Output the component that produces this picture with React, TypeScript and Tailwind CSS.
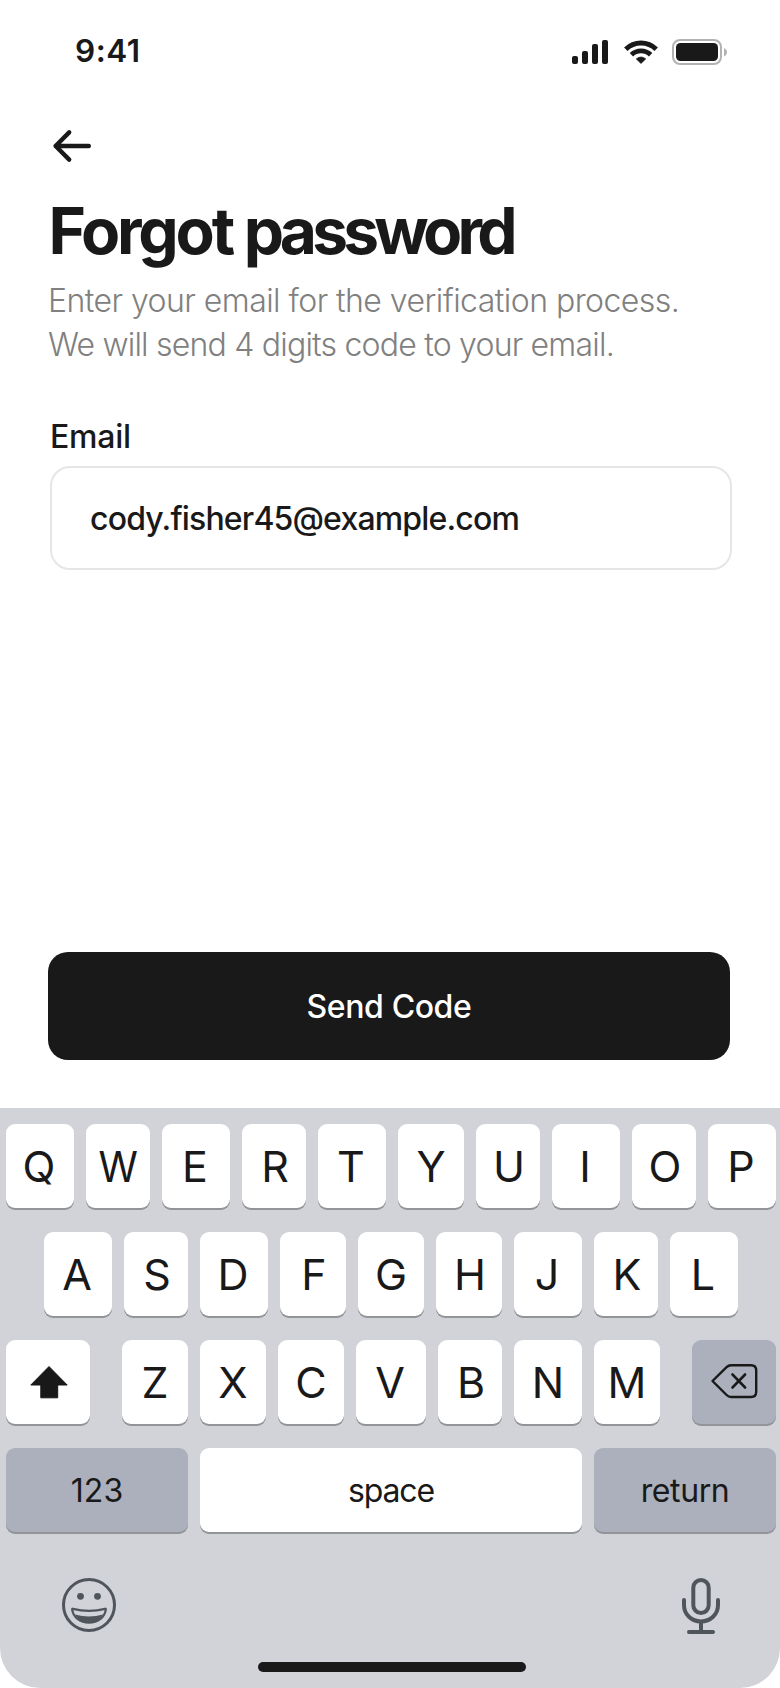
import React from 'react';

type KeyDef = { label: string; width: string; letter?: string };

const W64 = 'w-[64px]';
const W66 = 'w-[66px]';
const W68 = 'w-[68px]';
const W70 = 'w-[70px]';

const ROW_ONE: KeyDef[] = [
  { label: 'Q', width: W68, letter: '-translate-x-px' },
  { label: 'W', width: W64, letter: 'scale-x-[0.93]' },
  { label: 'E', width: W68, letter: '-translate-x-px' },
  { label: 'R', width: W64, letter: 'translate-x-px' },
  { label: 'T', width: W68, letter: '-translate-x-px' },
  { label: 'Y', width: W66 },
  { label: 'U', width: W64, letter: 'translate-x-px' },
  { label: 'I', width: W68, letter: '-translate-x-px' },
  { label: 'O', width: W64, letter: 'translate-x-px' },
  { label: 'P', width: W68, letter: '-translate-x-px' },
];

const ROW_TWO: KeyDef[] = [
  { label: 'A', width: W68, letter: '-translate-x-px' },
  { label: 'S', width: W64, letter: 'translate-x-px' },
  { label: 'D', width: W68, letter: '-translate-x-px' },
  { label: 'F', width: W66, letter: 'translate-x-px' },
  { label: 'G', width: W66 },
  { label: 'H', width: W66, letter: 'translate-x-px' },
  { label: 'J', width: W68, letter: '-translate-x-px' },
  { label: 'K', width: W64, letter: 'translate-x-px' },
  { label: 'L', width: W68, letter: '-translate-x-px' },
];

const ROW_THREE: KeyDef[] = [
  { label: 'Z', width: W66 },
  { label: 'X', width: W66 },
  { label: 'C', width: W66 },
  { label: 'V', width: W70, letter: '-translate-x-px' },
  { label: 'B', width: W64, letter: 'translate-x-px' },
  { label: 'N', width: W68 },
  { label: 'M', width: W66 },
];

const KEY_BASE =
  'flex h-[84px] shrink-0 items-center justify-center rounded-[9px] shadow-[0_2px_0_#929497]';

function LetterKey({ label, width, letter = '' }: KeyDef) {
  return (
    <button className={`${KEY_BASE} ${width} bg-white text-[43px] leading-[52px]`}>
      <span className={`inline-block ${letter}`}>{label}</span>
    </button>
  );
}

function StatusBar() {
  return (
    <div className="flex h-[102px] items-center justify-between pl-[75px] pr-[53px]">
      <span className="text-[31.5px] leading-10 font-semibold tracking-[0.5px]">9:41</span>
      <div className="flex items-center pt-0.5">
        <svg width="36" height="24" viewBox="0 0 36 24" fill="#191919">
          <rect x="0" y="16" width="6" height="8" rx="2" />
          <rect x="10" y="11" width="6" height="13" rx="2" />
          <rect x="20" y="4" width="6" height="20" rx="2" />
          <rect x="30" y="0" width="6" height="24" rx="2" />
        </svg>
        <svg className="ml-4" width="34" height="24" viewBox="0 0 34 24" fill="none" stroke="#191919">
          <path d="M1.8 9.2A21.6 21.6 0 0 1 32.2 9.2" strokeWidth="4.9" />
          <path d="M7.4 14.8A13.7 13.7 0 0 1 26.6 14.8" strokeWidth="4.8" />
          <path
            d="M12.3 18.9A7.6 7.6 0 0 1 21.7 18.9L17 23.4Z"
            fill="#191919"
            strokeWidth="0.8"
            strokeLinejoin="round"
          />
        </svg>
        <svg className="ml-[14px]" width="55" height="26" viewBox="0 0 55 26" fill="none">
          <rect x="1" y="1" width="48" height="24" rx="7" stroke="#b2b2b2" strokeWidth="2" />
          <rect x="4" y="4" width="42" height="18" rx="4.5" fill="#191919" />
          <path d="M52 9.2C53.8 9.8 55 11.3 55 13.2S53.8 16.8 52 17.4Z" fill="#b2b2b2" />
        </svg>
      </div>
    </div>
  );
}

export default function App() {
  return (
    <div className="flex h-[1688px] w-[780px] flex-col overflow-hidden bg-white font-['Inter',sans-serif] text-[#191919]">
      <StatusBar />

      <main className="flex grow flex-col px-12">
        <button className="mt-[26px] ml-[4px] h-9 w-10" aria-label="Back">
          <svg width="40" height="36" viewBox="0 0 40 36" fill="none" stroke="#191919" strokeWidth="4.4" strokeLinecap="round" strokeLinejoin="round">
            <path d="M36.8 18H3.6M17.2 4.4L3.6 18L17.2 31.6" />
          </svg>
        </button>

        <h1 className="mt-[31px] ml-[0.5px] text-[64px] leading-[72px] font-bold whitespace-nowrap">
          <span className="tracking-[-3.2px]">Forgot</span>
          <span className="tracking-[-3.4px]"> </span>
          <span className="tracking-[-4.8px]">password</span>
        </h1>

        <p className="mt-3 text-[32px] leading-[44px] font-light whitespace-nowrap text-[#808080]">
          <span className="block tracking-[-0.54px]">Enter your email for the verification process.</span>
          <span className="block tracking-[-0.79px]">We will send 4 digits code to your email.</span>
        </p>

        <label className="mt-[50px] ml-[2px] text-[32px] leading-10 font-medium tracking-[-0.25px]">
          Email
        </label>
        <div className="mt-[9px] ml-[2px] flex h-[104px] w-[682px] items-center rounded-[20px] border-2 border-[#e6e6e6] pt-0.5 pl-[38px] text-[32px] font-medium tracking-[-0.83px]">
          cody.fisher45@example.com
        </div>

        <button className="mt-auto mb-12 flex h-[108px] w-[682px] items-center justify-center rounded-[20px] bg-[#191919] pt-0.5 text-[32px] font-medium tracking-[-0.4px] text-white">
          Send Code
        </button>
      </main>

      <section className="flex h-[580px] flex-col rounded-b-[40px] bg-[#d1d3d9] pt-4">
        <div className="flex gap-3 pl-1.5">
          {ROW_ONE.map((k) => (
            <LetterKey key={k.label} {...k} />
          ))}
        </div>
        <div className="mt-6 flex gap-3 pl-11">
          {ROW_TWO.map((k) => (
            <LetterKey key={k.label} {...k} />
          ))}
        </div>
        <div className="mt-6 flex justify-between pr-1 pl-1.5">
          <button className={`${KEY_BASE} w-[84px] bg-white`} aria-label="Shift">
            <svg width="40" height="34" viewBox="0 0 40 34" fill="#191919" stroke="#191919" strokeWidth="1" strokeLinejoin="round">
              <path d="M21 1.5L39.2 20H29.7V32.8H12.8V20H2.8Z" />
            </svg>
          </button>
          <div className="flex gap-3">
            {ROW_THREE.map((k) => (
              <LetterKey key={k.label} {...k} />
            ))}
          </div>
          <button className={`${KEY_BASE} w-[84px] bg-[#abb0bc]`} aria-label="Delete">
            <svg width="48" height="36" viewBox="0 0 48 36" fill="none" stroke="#191919" strokeLinecap="round" strokeLinejoin="round">
              <path d="M2.5 17L16.6 3.2Q18.6 1.3 21 1.3H41Q46.2 1.3 46.2 6.5V27.8Q46.2 33 41 33H21Q18.6 33 16.6 31Z" strokeWidth="2.4" />
              <path d="M22.6 10.6L35 23.4M35 10.6L22.6 23.4" strokeWidth="2.8" />
            </svg>
          </button>
        </div>
        <div className="mt-6 flex gap-3 pl-1.5 text-[32px] leading-10">
          <button className={`${KEY_BASE} w-[182px] bg-[#abb0bc] pt-0.5`}>123</button>
          <button className={`${KEY_BASE} w-[382px] bg-white pt-0.5 tracking-[-1.1px]`}>space</button>
          <button className={`${KEY_BASE} w-[182px] bg-[#abb0bc] pt-0.5 tracking-[-0.4px]`}>return</button>
        </div>

        <div className="mt-[44px] flex items-start justify-between pr-[58px] pl-[61px]">
          <svg width="56" height="60" viewBox="0 0 56 60" fill="none" stroke="#50555c">
            <circle cx="28" cy="29" r="25.5" strokeWidth="3" />
            <circle cx="19.5" cy="20.3" r="3.4" fill="#50555c" stroke="none" />
            <circle cx="36.5" cy="20.3" r="3.4" fill="#50555c" stroke="none" />
            <path d="M11.2 33.5Q11 32.6 12 32.8Q28 36.8 44 32.8Q45 32.6 44.8 33.5C44 41 37 46.6 28 46.6C19 46.6 12 41 11.2 33.5Z" strokeWidth="2.3" />
            <path d="M14 38.6Q28 42.6 42 38.6C39.5 43.5 34.5 46.6 28 46.6S16.5 43.5 14 38.6Z" fill="#50555c" stroke="none" />
          </svg>
          <svg width="42" height="60" viewBox="0 0 42 60" fill="none" stroke="#50555c" strokeWidth="4" strokeLinecap="round">
            <rect x="13.3" y="4" width="15.4" height="33" rx="7.7" />
            <path d="M4 24V29C4 38.5 11.5 45.5 21 45.5S38 38.5 38 29V24" />
            <path d="M21 46V55" strokeLinecap="butt" />
            <path d="M9 56H33" />
          </svg>
        </div>

        <div className="mt-auto mb-4 ml-[258px] h-2.5 w-[268px] rounded-full bg-[#191919]" />
      </section>
    </div>
  );
}
